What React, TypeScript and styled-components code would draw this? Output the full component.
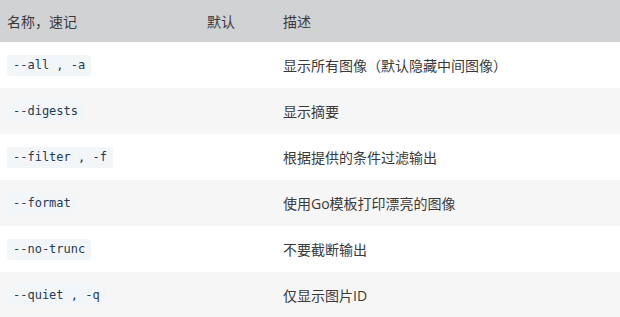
import styled, { createGlobalStyle } from "styled-components"

const GlobalStyle = createGlobalStyle`
  body {
    margin: 0;
    background: #ffffff;
    font-family: "Open Sans", "Noto Sans CJK SC", sans-serif;
    color: #333333;
  }
  * {
    box-sizing: border-box;
  }
`

const rows = [
  { name: "--all , -a", def: "", desc: "显示所有图像（默认隐藏中间图像）" },
  { name: "--digests", def: "", desc: "显示摘要" },
  { name: "--filter , -f", def: "", desc: "根据提供的条件过滤输出" },
  { name: "--format", def: "", desc: "使用Go模板打印漂亮的图像" },
  { name: "--no-trunc", def: "", desc: "不要截断输出" },
  { name: "--quiet , -q", def: "", desc: "仅显示图片ID" },
]

const App = () => {
  return (
    <>
      <GlobalStyle />
      <Table>
        <thead>
          <HeadRow>
            <Th $width={200}>名称，速记</Th>
            <Th $width={76}>默认</Th>
            <Th>描述</Th>
          </HeadRow>
        </thead>
        <tbody>
          {rows.map((row, i) => (
            <Row key={row.name} $striped={i % 2 === 1}>
              <Td>
                <Code>{row.name}</Code>
              </Td>
              <Td>{row.def}</Td>
              <Td>{row.desc}</Td>
            </Row>
          ))}
        </tbody>
      </Table>
    </>
  )
}

const Table = styled.table`
  width: 620px;
  border-collapse: collapse;
  table-layout: fixed;
  font-size: 14px;
`

const HeadRow = styled.tr`
  height: 42px;
  background-color: #d1d2d4;
`

const Th = styled.th<{ $width?: number }>`
  width: ${(p) => (p.$width ? `${p.$width}px` : "auto")};
  padding: 0 7px;
  text-align: left;
  font-weight: normal;
  color: #3a3a3a;
  vertical-align: middle;
`

const Row = styled.tr<{ $striped: boolean }>`
  height: 46px;
  background-color: ${(p) => (p.$striped ? "#f6f6f6" : "#ffffff")};
`

const Td = styled.td`
  padding: 0 7px;
  vertical-align: middle;
  color: #3a3a3a;
`

const Code = styled.code`
  display: inline-block;
  padding: 2px 6px;
  line-height: 17px;
  border-radius: 3px;
  background-color: #f3f6f9;
  color: #243b53;
  font-family: "DejaVu Sans Mono", monospace;
  font-size: 12px;
`

export default App
